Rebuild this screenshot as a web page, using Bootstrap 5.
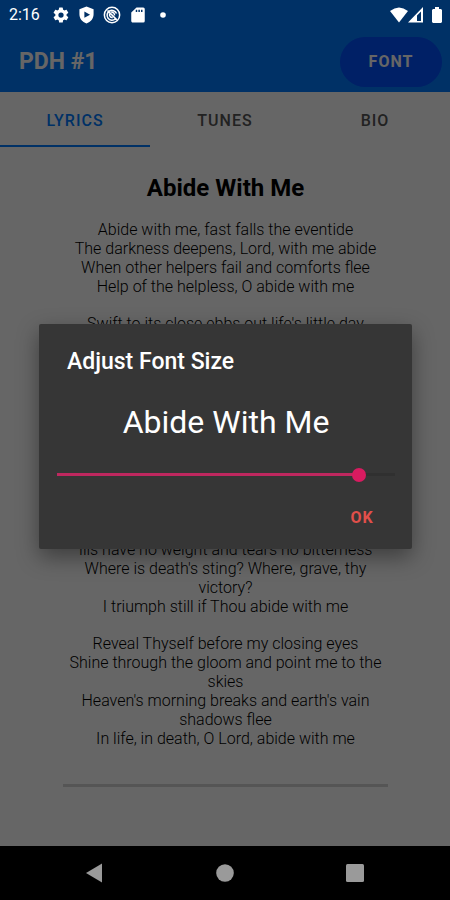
<!DOCTYPE html>
<html lang="en">
<head>
<meta charset="utf-8">
<meta name="viewport" content="width=device-width, initial-scale=1">
<title>PDH #1</title>
<link href="https://cdn.jsdelivr.net/npm/bootstrap@5.3.0/dist/css/bootstrap.min.css" rel="stylesheet">
<style>
body { font-family: Roboto, "Liberation Sans", sans-serif; background: #000; color: #000; }
.app-head { background: #007bff; }
/* Status icons stay bright above the backdrop */
.status-bar { z-index: 1060; height: 30px; padding: 0 8px 0 9px; color: #fff; font-size: 16px; line-height: 30px; }
.status-icons { margin-left: 12px; gap: 8px; }
.status-bar svg, .sys-nav svg { display: block; fill: currentColor; }
.app-bar { height: 62px; padding: 1px 8px 0 19px; color: #fff; }
.app-title { font-size: 23px; line-height: 28px; font-weight: 700; }
.btn-font { --bs-btn-color: #fff; --bs-btn-bg: #0050ff; --bs-btn-border-color: #0050ff; width: 102px; height: 50px; font-size: 16px; font-weight: 700; letter-spacing: 1px; }
.app-tabs .nav-link { height: 55px; padding: 0; border-radius: 0; border-bottom: 2px solid transparent; color: #555; font-size: 16px; line-height: 58px; font-weight: 500; letter-spacing: 1px; }
.app-tabs .nav-link.active { color: #007bff; border-bottom-color: #007bff; background: none; }
.lyrics { padding: 27px 62px 57px 63px; font-size: 16px; line-height: 19px; font-weight: 300; color: #000; }
.lyrics h2 { margin: 0 0 18px; font-size: 24px; line-height: 28px; font-weight: 700; color: #000; }
.lyrics p { margin: 0 0 18px; }
.lyrics hr { margin: 36px 0 0; border-top: 3px solid #d4d4d4; opacity: 1; }
.scrim { background: rgba(0, 0, 0, .6); z-index: 1050; padding: 26px 38px 0 39px; }
.font-dialog { background: #363636; color: #fff; border-radius: 2px; box-shadow: 0 8px 22px rgba(0, 0, 0, .4); padding: 23px 17px 11px 18px; }
.font-dialog h1 { margin: 0 0 0 10px; font-size: 23px; line-height: 30px; font-weight: 500; }
.sample { margin: 23px 0 0; font-size: 32px; line-height: 44px; }
.size-range { display: block; width: 100%; height: 20px; margin: 21px 0 0; appearance: none; background: linear-gradient(to right, #bf285f 90%, #303030 90%) center / 100% 3px no-repeat; }
.size-range::-webkit-slider-thumb { appearance: none; width: 14px; height: 14px; border-radius: 50%; background: #d81b60; }
.size-range::-moz-range-thumb { width: 14px; height: 14px; border: 0; border-radius: 50%; background: #d81b60; }
.btn-ok { --bs-btn-color: #e04f4a; --bs-btn-hover-color: #e04f4a; width: 66px; height: 40px; margin-top: 13px; padding: 0; font-size: 16px; font-weight: 700; letter-spacing: 1px; }
.sys-nav { height: 54px; padding: 0 30px; background: #000; }
.sys-nav .btn { color: #9a9a9a; }
</style>
<script src="https://cdn.jsdelivr.net/npm/bootstrap@5.3.0/dist/js/bootstrap.bundle.min.js"></script>
</head>
<body class="min-vh-100 d-flex flex-column">
<div class="position-relative flex-grow-1 bg-white d-flex flex-column">
  <header class="app-head">
    <div class="status-bar position-relative d-flex align-items-center">
      <span>2:16</span>
      <div class="status-icons d-flex align-items-center">
        <svg width="18" height="18" viewBox="0 0 24 24" aria-hidden="true"><path fill-rule="evenodd" d="M19.4 13a7.500 7.500 0 0 0 0-2l2.100-1.600c.2-.2.200-.4.100-.7l-2-3.400c-.1-.2-.4-.3-.6-.2l-2.500 1a7 7 0 0 0-1.700-1l-.4-2.600a.5.500 0 0 0-.5-.5h-4a.5.500 0 0 0-.5.500L9 5.100a7 7 0 0 0-1.700 1l-2.500-1c-.2-.1-.5 0-.6.2l-2 3.400c-.1.300-.1.500.1.700L4.500 11a8 8 0 0 0 0 2l-2.200 1.600c-.2.200-.2.400-.1.700l2 3.400c.1.200.4.300.6.2l2.500-1a7 7 0 0 0 1.700 1l.4 2.600c0 .3.200.5.500.5h4c.3 0 .5-.2.500-.5l.4-2.600a7 7 0 0 0 1.700-1l2.500 1c.2.100.5 0 .6-.2l2-3.400c.1-.3.100-.5-.1-.7zM12 15.500a3.500 3.500 0 1 1 0-7 3.500 3.500 0 0 1 0 7z"/></svg>
        <svg width="17" height="18" viewBox="0 0 24 24" aria-hidden="true"><path fill-rule="evenodd" d="M12 0 2 4v7c0 6 4 11 10 13 6-2 10-7 10-13V4zM9 7 17 11.500 9 16z"/></svg>
        <svg width="18" height="18" viewBox="0 0 24 24" aria-hidden="true"><g fill="none" stroke="currentColor" stroke-width="2"><circle cx="12" cy="12" r="10.200"/><path d="M6 6 18.500 18.500M16.500 17A6.500 6.500 0 1 1 18 10M9 10.500A3.500 3.500 0 0 0 13 15.300M11 8.500A3.500 3.500 0 0 1 15.300 12.500"/></g></svg>
        <svg width="18" height="18" viewBox="0 0 24 24" aria-hidden="true"><path fill-rule="evenodd" d="M10 2 3 8.500V20c0 1.100.9 2 2 2h14a2 2 0 0 0 2-2V4a2 2 0 0 0-2-2zM9 5h2v3H9zm3.500 0h2v3h-2zM16 5h2v3h-2z"/></svg>
        <svg width="18" height="18" viewBox="0 0 18 18" aria-hidden="true"><circle cx="8" cy="9" r="2.800"/></svg>
      </div>
      <div class="d-flex align-items-center ms-auto">
        <svg width="18" height="16" viewBox="0 0 18 16" aria-hidden="true"><path d="M0 4Q9-3 18 4L9 15.500z"/></svg>
        <svg width="16" height="16" viewBox="0 0 16 16" aria-hidden="true"><path fill-rule="evenodd" d="M0 15.500 15 0v15.500zM9 8.500v5.500h4V4.500z"/></svg>
        <svg class="ms-2" width="10" height="16" viewBox="0 0 10 16" aria-hidden="true"><path d="M3 0h4v2h2l1 1v12l-1 1H1l-1-1V3l1-1h2z"/></svg>
      </div>
    </div>
    <div class="app-bar d-flex align-items-center justify-content-between">
      <span class="app-title">PDH #1</span>
      <button type="button" class="btn btn-font rounded-pill">FONT</button>
    </div>
  </header>
  <nav class="app-tabs nav nav-justified" aria-label="Hymn sections">
    <a class="nav-link active" aria-current="page" href="#lyrics">LYRICS</a>
    <a class="nav-link" href="#tunes">TUNES</a>
    <a class="nav-link" href="#bio">BIO</a>
  </nav>
  <main id="lyrics" class="lyrics text-center flex-grow-1">
    <h2>Abide With Me</h2>
    <p>Abide with me, fast falls the eventide<br>The darkness deepens, Lord, with me abide<br>When other helpers fail and comforts flee<br>Help of the helpless, O abide with me</p>
    <p>Swift to its close ebbs out life's little day<br>Earth's joys grow dim, its glories pass away<br>Change and decay in all around I see<br>O Thou who changest not, abide with me</p>
    <p>I need Thy presence every passing hour<br>What but Thy grace can foil the tempter's power?<br>Who like Thyself my guide and stay can be?<br>Through cloud and sunshine, abide with me</p>
    <p>I fear no foe with Thee at hand to bless<br>Ills have no weight and tears no bitterness<br>Where is death's sting? Where, grave, thy victory?<br>I triumph still if Thou abide with me</p>
    <p>Reveal Thyself before my closing eyes<br>Shine through the gloom and point me to the skies<br>Heaven's morning breaks and earth's vain shadows flee<br>In life, in death, O Lord, abide with me</p>
    <hr>
  </main>
  <div class="scrim position-absolute top-0 start-0 w-100 h-100 d-flex align-items-center">
    <section class="font-dialog w-100" role="dialog" aria-modal="true" aria-labelledby="dialog-title">
      <h1 id="dialog-title">Adjust Font Size</h1>
      <p class="sample text-center">Abide With Me</p>
      <input class="size-range" type="range" min="0" max="100" value="91" aria-label="Font size">
      <div class="d-flex justify-content-end">
        <button type="button" class="btn btn-ok">OK</button>
      </div>
    </section>
  </div>
</div>
<nav class="sys-nav d-flex align-items-center" aria-label="System navigation">
  <button type="button" class="btn p-0 flex-fill d-flex justify-content-center" aria-label="Back"><svg width="20" height="20" viewBox="0 0 20 20"><path d="M1 10 17 .5v19z"/></svg></button>
  <button type="button" class="btn p-0 flex-fill d-flex justify-content-center" aria-label="Home"><svg width="20" height="20" viewBox="0 0 20 20"><circle cx="10" cy="10" r="8.800"/></svg></button>
  <button type="button" class="btn p-0 flex-fill d-flex justify-content-center" aria-label="Overview"><svg width="20" height="20" viewBox="0 0 20 20"><rect x="1" y="1" width="18" height="18" rx="1.500"/></svg></button>
</nav>
</body>
</html>
